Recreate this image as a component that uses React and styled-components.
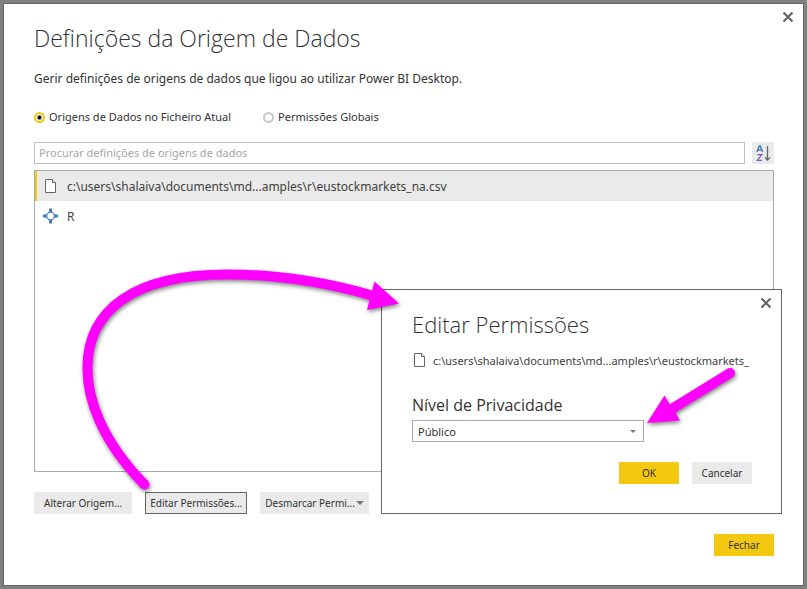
import React from 'react';
import styled, { createGlobalStyle } from 'styled-components';

const GlobalStyle = createGlobalStyle`
  * { box-sizing: border-box; }
  body {
    margin: 0;
    background: #808080;
    color: #333;
    font-family: "Noto Sans", "Open Sans", sans-serif;
    font-size: 11px;
  }
  h1, h2, p, ul { margin: 0; padding: 0; }
  button, input, select { font: inherit; color: inherit; }
`;

const Frame = styled.div`
  display: flex;
  min-height: 100vh;
  padding: 3px;
  background: #808080;
`;

const Window = styled.main`
  position: relative;
  display: flex;
  flex: 1;
  flex-direction: column;
  min-width: 0;
  padding: 20px 29px 29px 30px;
  border: 1px solid #666;
  background: #fff;
`;

const Title = styled.h1`
  font-family: "Open Sans", sans-serif;
  font-size: 23px;
  font-weight: 300;
  line-height: 28px;
`;

const Intro = styled.p`
  margin-top: 17px;
  font-size: 12px;
  line-height: 20px;
`;

const ScopeGroup = styled.div`
  display: flex;
  gap: 32px;
  margin-top: 18px;
`;

const ScopeOption = styled.label`
  display: flex;
  align-items: center;
  gap: 4px;
  line-height: 20px;
`;

const Radio = styled.input`
  appearance: none;
  width: 11px;
  height: 11px;
  margin: 0;
  border: 2px solid #c8c8c8;
  border-radius: 50%;
  background: #fff;

  &:checked {
    border-color: #f2c811;
    background: radial-gradient(circle, #000 0 1px, #fff 3px);
  }
`;

const SearchRow = styled.div`
  display: flex;
  gap: 7px;
  margin-top: 15px;
`;

const SearchInput = styled.input`
  flex: 1;
  min-width: 0;
  height: 22px;
  padding: 0 4px 1px;
  border: 1px solid #c0c0c0;
  background: #fff;
  outline: none;

  &::placeholder { color: #a6a6a6; opacity: 1; }
`;

const SortButton = styled.button`
  display: grid;
  place-items: center;
  width: 22px;
  height: 22px;
  padding: 0;
  border: 0;
  background: #eaeaea;
`;

const SourceList = styled.ul`
  flex: 1;
  min-height: 120px;
  margin-top: 6px;
  border: 1px solid #ababab;
  list-style: none;
`;

const SourceRow = styled.li`
  display: flex;
  align-items: center;
  gap: 9px;
  height: 30px;
  padding-left: 6px;
  border-left: 2px solid ${(p) => (p.$selected ? '#f2c811' : 'transparent')};
  background: ${(p) => (p.$selected ? '#eaeaea' : 'transparent')};
`;

const SourceName = styled.span`
  white-space: nowrap;
  font-size: ${(p) => p.$size}px;
  color: #404040;
`;

const Actions = styled.div`
  display: flex;
  gap: 13px;
  margin-top: 20px;
`;

const Button = styled.button`
  display: flex;
  align-items: center;
  justify-content: center;
  gap: 1px;
  min-width: 60px;
  height: 22px;
  padding: 0 ${(p) => p.$pad || 0}px;
  border: 1px solid ${(p) => (p.$focused ? '#666' : 'transparent')};
  background: ${(p) => (p.$primary ? '#f2c811' : '#eaeaea')};
  font-size: 10px;
  white-space: nowrap;
`;

const Footer = styled.div`
  display: flex;
  justify-content: flex-end;
  gap: 13px;
  margin-top: 20px;
`;

const CloseButton = styled.button`
  position: absolute;
  top: 7px;
  right: 9px;
  display: grid;
  padding: 0;
  border: 0;
  background: none;
`;

const Dialog = styled.section`
  position: absolute;
  right: 21px;
  bottom: 71px;
  width: 401px;
  padding: 20px 29px 29px 30px;
  border: 1px solid #666;
  background: #fff;
`;

const DialogTitle = styled.h2`
  font-family: "Open Sans", sans-serif;
  font-size: 22px;
  font-weight: 300;
  line-height: 28px;
`;

const DialogSource = styled.div`
  display: flex;
  align-items: center;
  gap: 6px;
  height: 20px;
  margin-top: 12px;
`;

const FieldLabel = styled.label`
  display: block;
  margin-top: 24px;
  font-family: "Open Sans", sans-serif;
  font-size: 16px;
  line-height: 22px;
`;

const SelectBox = styled.div`
  display: grid;
  align-items: center;
  width: 232px;
  margin-top: 4px;

  > * { grid-area: 1 / 1; }
  > svg { justify-self: end; margin-right: 8px; pointer-events: none; }
`;

const Select = styled.select`
  appearance: none;
  width: 100%;
  height: 22px;
  padding: 0 5px;
  border: 1px solid #ababab;
  border-radius: 0;
  background: #fff;
`;

const Annotation = styled.svg`
  position: absolute;
  right: -1px;
  bottom: -1px;
  overflow: visible;
  pointer-events: none;
  filter: drop-shadow(1px 2px 2px rgba(0, 0, 0, 0.5));
`;

const CloseIcon = () => (
  <svg width="12" height="12" viewBox="0 0 12 12" fill="none" stroke="#666" strokeWidth="2.2">
    <path d="M1.500 1.500l9 9M10.500 1.500l-9 9" />
  </svg>
);

const FileIcon = () => (
  <svg width="15" height="16" viewBox="0 0 15 16" fill="#fff" stroke="#666">
    <path d="M2.500 1.500h7l3 3v10h-10z" />
    <path d="M9.500 1.500v3h3" />
  </svg>
);

const TargetIcon = () => (
  <svg width="15" height="16" viewBox="0 0 15 16">
    <path d="M6 .5h3v4H6zM6 11.500h3v4H6zM0 6.500h4v3H0zM11 6.500h4v3h-4z" fill="#4a7ebb" />
    <path d="M7.500 2l6 6-6 6-6-6z" fill="#4a7ebb" />
    <circle cx="7.500" cy="8" r="3.200" fill="#fff" />
  </svg>
);

const SortIcon = () => (
  <svg width="16" height="18" viewBox="0 0 16 18" fill="none">
    <path d="M2 8l2.300-6h1L7.600 8M2.800 6h4" stroke="#4a7ebb" strokeWidth="1.500" />
    <path d="M2.300 10.600h4.500L2.300 16.300H7" stroke="#8d5fa8" strokeWidth="1.300" />
    <path d="M12.500 2v14M10 13.500l2.500 2.500 2.500-2.500" stroke="#666" strokeWidth="1.300" />
  </svg>
);

const Caret = ({ width = 8, height = 4 }) => (
  <svg width={width} height={height} viewBox="0 0 8 4">
    <path d="M0 0h8L4 4z" fill="#777" />
  </svg>
);

const Arrows = () => (
  <Annotation width="401" height="225" viewBox="381 289 401 225" aria-hidden="true">
    <g fill="none" stroke="#f0f" strokeWidth="10">
      <path d="M144.500 484.500C101 440 87 398 87.500 367C88 310 134 274.500 227 274.500C275 274.500 325 282 372 295.500" />
      <path d="M144.500 484.500h0M730 373h0" strokeLinecap="round" />
      <path d="M730 373L670 410" />
    </g>
    <path d="M374.500 281.500L399 303.500L367 310z" fill="#f0f" />
    <path d="M647 423L664.500 395.500L669.500 404L675 412L680 420.500z" fill="#f0f" />
  </Annotation>
);

export default function App() {
  return (
    <>
      <GlobalStyle />
      <Frame>
        <Window>
          <CloseButton aria-label="Fechar janela"><CloseIcon /></CloseButton>
          <Title>Definições da Origem de Dados</Title>
          <Intro>Gerir definições de origens de dados que ligou ao utilizar Power BI Desktop.</Intro>
          <ScopeGroup role="radiogroup">
            <ScopeOption>
              <Radio type="radio" name="scope" defaultChecked />
              Origens de Dados no Ficheiro Atual
            </ScopeOption>
            <ScopeOption>
              <Radio type="radio" name="scope" />
              Permissões Globais
            </ScopeOption>
          </ScopeGroup>
          <SearchRow>
            <SearchInput
              type="text"
              placeholder="Procurar definições de origens de dados"
              aria-label="Procurar definições de origens de dados"
            />
            <SortButton aria-label="Ordenar"><SortIcon /></SortButton>
          </SearchRow>
          <SourceList>
            <SourceRow $selected>
              <FileIcon />
              <SourceName $size={12}>c:\users\shalaiva\documents\md...amples\r\eustockmarkets_na.csv</SourceName>
            </SourceRow>
            <SourceRow>
              <TargetIcon />
              <SourceName $size={12}>R</SourceName>
            </SourceRow>
          </SourceList>
          <Actions>
            <Button $pad={9}>Alterar Origem...</Button>
            <Button $pad={4} $focused>Editar Permissões...</Button>
            <Button $pad={4}>Desmarcar Permi...<Caret /></Button>
          </Actions>
          <Footer>
            <Button $primary>Fechar</Button>
          </Footer>

          <Dialog role="dialog" aria-labelledby="dialog-title">
            <CloseButton aria-label="Fechar caixa de diálogo"><CloseIcon /></CloseButton>
            <DialogTitle id="dialog-title">Editar Permissões</DialogTitle>
            <DialogSource>
              <FileIcon />
              <SourceName $size={11}>c:\users\shalaiva\documents\md...amples\r\eustockmarkets_</SourceName>
            </DialogSource>
            <FieldLabel htmlFor="privacy">Nível de Privacidade</FieldLabel>
            <SelectBox>
              <Select id="privacy" defaultValue="Público">
                <option>Público</option>
              </Select>
              <Caret width={6} height={3} />
            </SelectBox>
            <Footer>
              <Button $primary>OK</Button>
              <Button>Cancelar</Button>
            </Footer>
            <Arrows />
          </Dialog>
        </Window>
      </Frame>
    </>
  );
}
